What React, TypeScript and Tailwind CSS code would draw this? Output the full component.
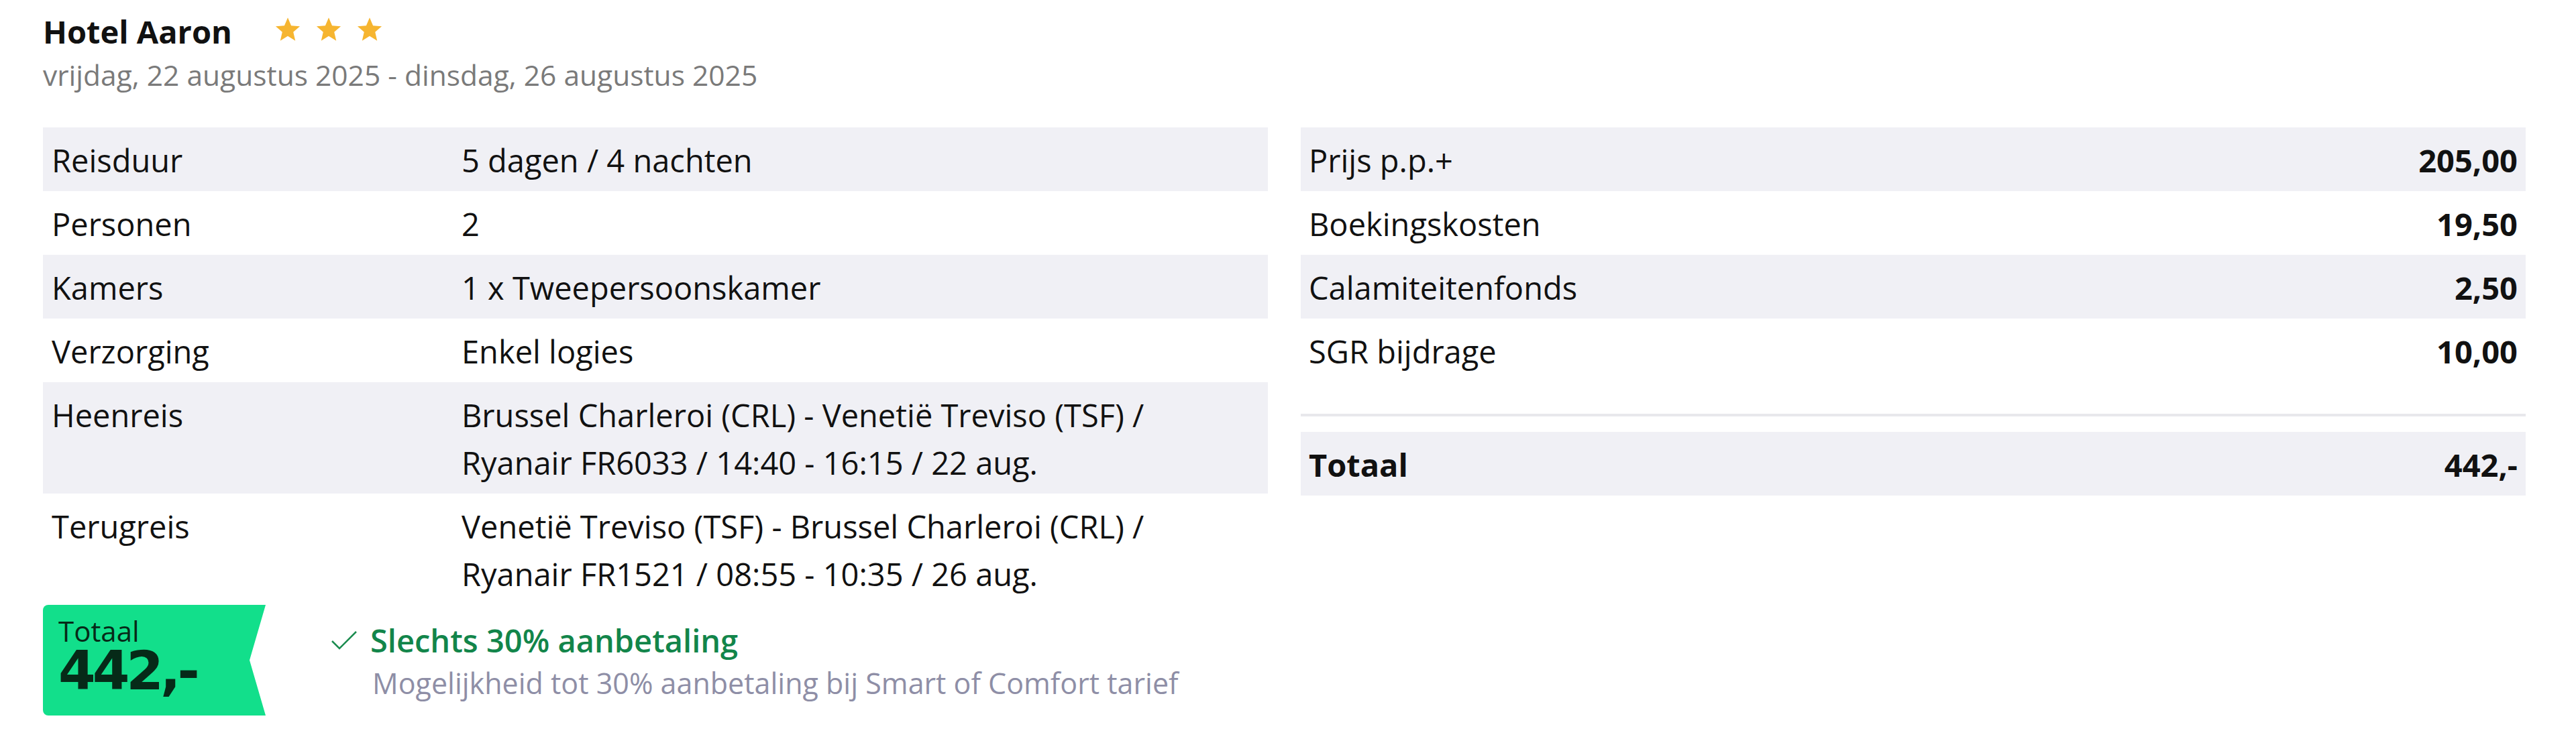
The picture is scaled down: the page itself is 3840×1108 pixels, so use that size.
import React from 'react'

type Row = { label: string; value: string[] }

const tripRows: Row[] = [
  { label: 'Reisduur', value: ['5 dagen / 4 nachten'] },
  { label: 'Personen', value: ['2'] },
  { label: 'Kamers', value: ['1 x Tweepersoonskamer'] },
  { label: 'Verzorging', value: ['Enkel logies'] },
  {
    label: 'Heenreis',
    value: ['Brussel Charleroi (CRL) - Venetië Treviso (TSF) /', 'Ryanair FR6033 / 14:40 - 16:15 / 22 aug.'],
  },
  {
    label: 'Terugreis',
    value: ['Venetië Treviso (TSF) - Brussel Charleroi (CRL) /', 'Ryanair FR1521 / 08:55 - 10:35 / 26 aug.'],
  },
]

const priceRows = [
  { label: 'Prijs p.p.+', amount: '205,00' },
  { label: 'Boekingskosten', amount: '19,50' },
  { label: 'Calamiteitenfonds', amount: '2,50' },
  { label: 'SGR bijdrage', amount: '10,00' },
]

function Star() {
  return (
    <svg width="42" height="42" viewBox="0 0 24 24" className="shrink-0">
      <path
        d="M12 1.8l2.9 6.9 7.4.6-5.6 4.9 1.7 7.3L12 17.6l-6.4 3.9 1.7-7.3L1.7 9.3l7.4-.6z"
        fill="#f6b530"
      />
    </svg>
  )
}

function Check() {
  return (
    <svg width="40" height="30" viewBox="0 0 40 30" className="shrink-0">
      <path d="M2 16 L13 27 L38 2" fill="none" stroke="#1c8c50" strokeWidth="2.5" />
    </svg>
  )
}

export default function App() {
  return (
    <div
      className="bg-white text-[#111] pl-[64px] pr-[75px] pt-[17px] w-[3840px] h-[1108px]"
      style={{ fontFamily: '"Open Sans", "Noto Sans", sans-serif' }}
    >
      {/* header */}
      <div className="flex items-center">
        <h1 className="text-[47px] leading-[60px] font-bold">Hotel Aaron</h1>
        <div className="flex items-center gap-[19px] ml-[62px] -mt-[6px]">
          <Star />
          <Star />
          <Star />
        </div>
      </div>
      <p className="mt-[7px] text-[42.5px] leading-[56px] text-[#7a7a7a]">
        vrijdag, 22 augustus 2025 - dinsdag, 26 augustus 2025
      </p>

      <div className="grid grid-cols-2 gap-x-[49px] mt-[50px]">
        {/* trip details */}
        <div>
          {tripRows.map((r, i) => (
            <div
              key={r.label}
              className={`grid grid-cols-[611px_1fr] px-[13px] pt-[14px] pb-[10px] text-[47px] leading-[71px] ${
                i % 2 === 0 ? 'bg-[#f0f0f5]' : ''
              }`}
            >
              <div>{r.label}</div>
              <div>
                {r.value.map((v) => (
                  <div key={v}>{v}</div>
                ))}
              </div>
            </div>
          ))}

          <div className="flex items-start">
            <div className="w-[332px] h-[165px] bg-[#12df8b] rounded-l-[8px] pl-[23px] pt-[17px] text-[#062a18] [clip-path:polygon(0_0,100%_0,calc(100%_-_24px)_50%,100%_100%,0_100%)]">
              <div className="text-[42px] leading-[44px]">Totaal</div>
              <div
                className="mt-[2px] text-[80px] leading-[72px] font-black tracking-[-5px]"
                style={{ fontFamily: '"DejaVu Sans", Roboto, sans-serif' }}
              >
                442,-
              </div>
            </div>
            <div className="ml-[97px] pt-[23px]">
              <div className="flex items-center gap-[19px] text-[47px] leading-[60px] font-semibold text-[#12854a]">
                <Check />
                <span>Slechts 30% aanbetaling</span>
              </div>
              <div className="mt-[4px] pl-[62px] text-[43px] leading-[60px] text-[#8e8ea6]">
                Mogelijkheid tot 30% aanbetaling bij Smart of Comfort tarief
              </div>
            </div>
          </div>
        </div>

        {/* price breakdown */}
        <div>
          {priceRows.map((r, i) => (
            <div
              key={r.label}
              className={`flex justify-between px-[12px] pt-[14px] pb-[10px] text-[47px] leading-[71px] ${
                i % 2 === 0 ? 'bg-[#f0f0f5]' : ''
              }`}
            >
              <span>{r.label}</span>
              <span className="font-bold">{r.amount}</span>
            </div>
          ))}
          <div className="mt-[47px] h-[4px] bg-[#e8e8ec]" />
          <div className="mt-[23px] flex justify-between px-[12px] pt-[14px] pb-[10px] text-[47px] leading-[71px] font-bold bg-[#f0f0f5]">
            <span>Totaal</span>
            <span>442,-</span>
          </div>
        </div>
      </div>
    </div>
  )
}
